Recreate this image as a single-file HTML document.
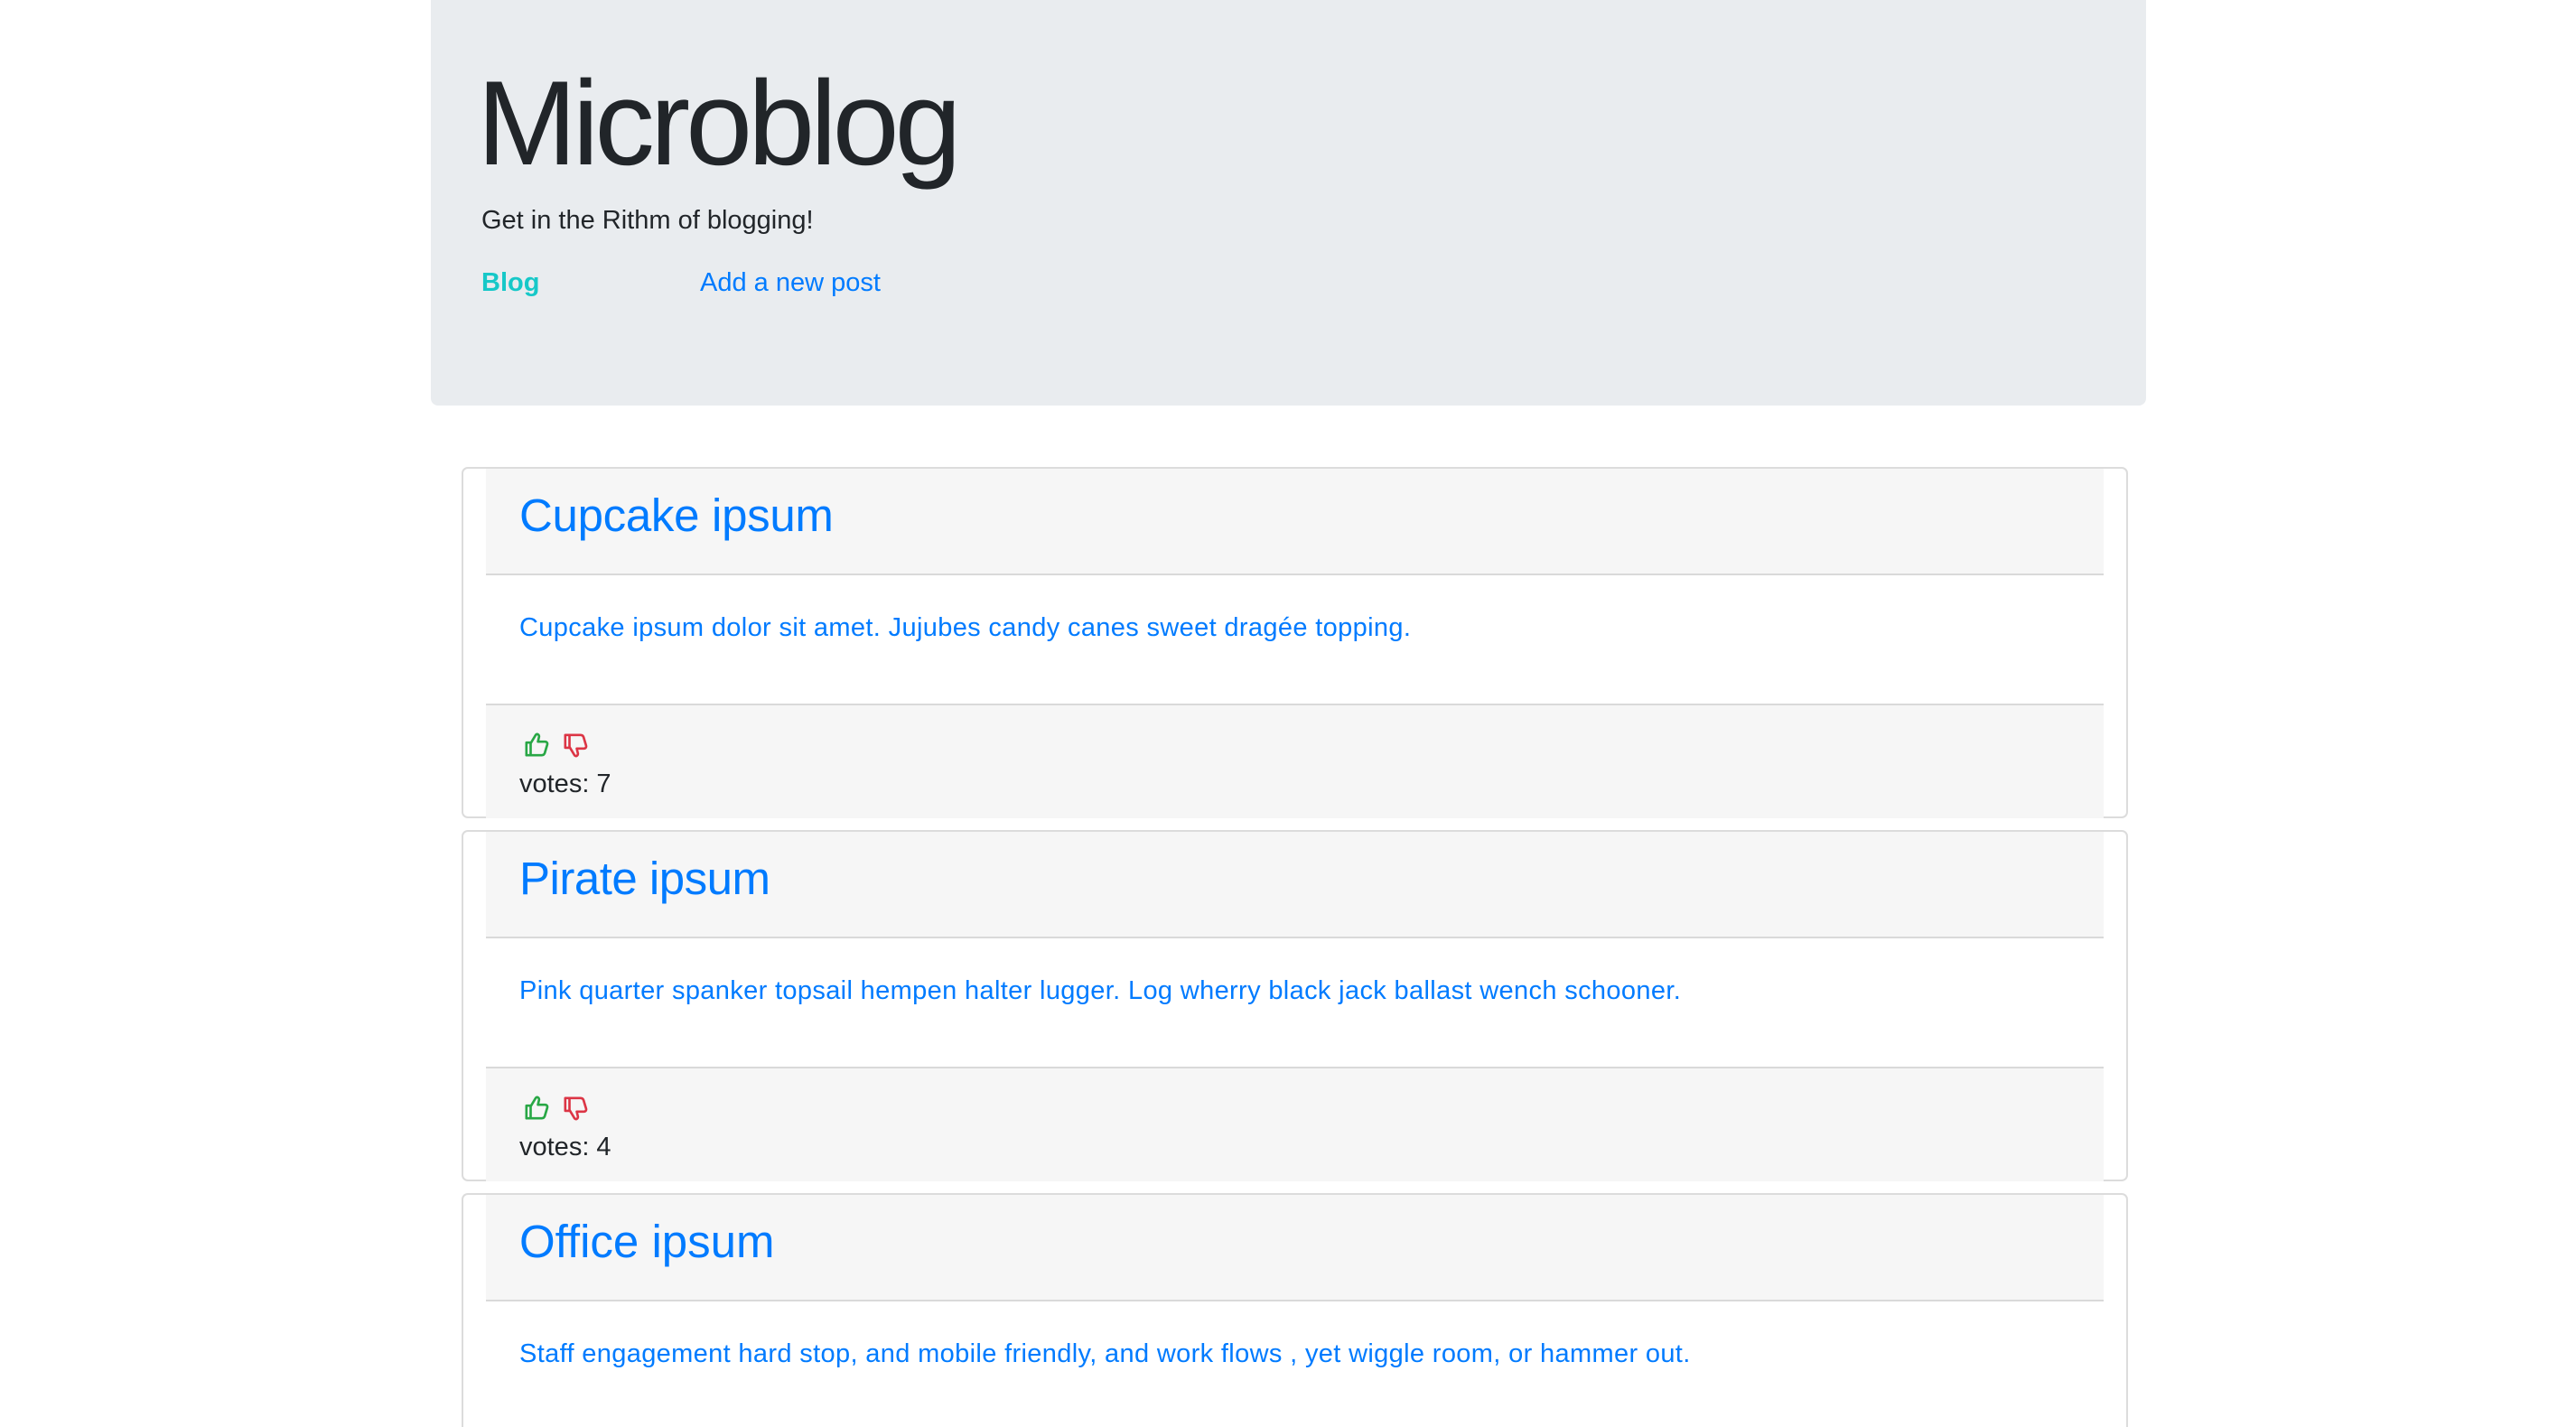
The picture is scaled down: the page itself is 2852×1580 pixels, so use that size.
<!DOCTYPE html>
<html><head><meta charset="utf-8"><style>
html,body{margin:0;padding:0;background:#fff;width:2852px;height:1578px;overflow:hidden;font-family:"Liberation Sans",sans-serif;}
.t{position:absolute;line-height:1;white-space:nowrap;}
.jumbo{position:absolute;left:477px;top:-10px;width:1899px;height:459px;background:#e9ecef;border-radius:8px;}
.card{position:absolute;left:511px;width:1841px;height:385px;border:2px solid #dcdcdc;border-radius:7px;background:#fff;}
.hd{position:absolute;left:25px;width:1791px;top:0;height:116px;background:#f6f6f6;border-bottom:2px solid #d9d9d9;}
.ft{position:absolute;left:25px;width:1791px;top:260px;height:125px;background:#f6f6f6;border-top:2px solid #d9d9d9;}
</style></head><body>
<div class="jumbo"></div>
<div class="t" style="left:528px;top:71px;font-size:133px;font-weight:300;color:#212529;letter-spacing:-5px;">Microblog</div>
<div class="t" style="left:533px;top:230px;font-size:29px;color:#212529;">Get in the Rithm of blogging!</div>
<div class="t" style="left:533px;top:299px;font-size:29px;color:#17c8c8;font-weight:bold;">Blog</div>
<div class="t" style="left:775px;top:299px;font-size:29px;color:#007bff;">Add a new post</div>

<div class="card" style="top:517px;">
 <div class="hd"></div><div class="ft"></div>
 <div class="t" style="left:62px;top:26px;font-size:51px;color:#007bff;letter-spacing:-0.3px;">Cupcake ipsum</div>
 <div class="t" style="left:62px;top:162px;font-size:29px;color:#007bff;letter-spacing:0.35px;">Cupcake ipsum dolor sit amet. Jujubes candy canes sweet dragée topping.</div>
 <svg style="position:absolute;left:67px;top:290px" width="30" height="30" viewBox="0 0 16 16"><path d="M1.5 7h2.5v7.5h-2.5z M4 7.5l3-5c1-1 2 0 2 1l-.7 3h4.2c1 0 1.6.8 1.3 1.8l-1.5 5c-.3.8-.9 1.2-1.7 1.2H4" fill="none" stroke="#28a745" stroke-width="1.4" stroke-linejoin="round"/></svg>
 <svg style="position:absolute;left:110px;top:292px" width="30" height="30" viewBox="0 0 16 16"><path d="M1.5 9h2.5V1.5H1.5z M4 8.5l3 5c1 1 2 0 2-1l-.7-3h4.2c1 0 1.6-.8 1.3-1.8l-1.5-5C12 1.9 11.4 1.5 10.6 1.5H4" fill="none" stroke="#dc3545" stroke-width="1.4" stroke-linejoin="round"/></svg>
 <div class="t" style="left:62px;top:335px;font-size:29px;color:#212529;">votes: 7</div>
</div>

<div class="card" style="top:919px;">
 <div class="hd"></div><div class="ft"></div>
 <div class="t" style="left:62px;top:26px;font-size:51px;color:#007bff;letter-spacing:-0.5px;">Pirate ipsum</div>
 <div class="t" style="left:62px;top:162px;font-size:29px;color:#007bff;letter-spacing:0.35px;">Pink quarter spanker topsail hempen halter lugger. Log wherry black jack ballast wench schooner.</div>
 <svg style="position:absolute;left:67px;top:290px" width="30" height="30" viewBox="0 0 16 16"><path d="M1.5 7h2.5v7.5h-2.5z M4 7.5l3-5c1-1 2 0 2 1l-.7 3h4.2c1 0 1.6.8 1.3 1.8l-1.5 5c-.3.8-.9 1.2-1.7 1.2H4" fill="none" stroke="#28a745" stroke-width="1.4" stroke-linejoin="round"/></svg>
 <svg style="position:absolute;left:110px;top:292px" width="30" height="30" viewBox="0 0 16 16"><path d="M1.5 9h2.5V1.5H1.5z M4 8.5l3 5c1 1 2 0 2-1l-.7-3h4.2c1 0 1.6-.8 1.3-1.8l-1.5-5C12 1.9 11.4 1.5 10.6 1.5H4" fill="none" stroke="#dc3545" stroke-width="1.4" stroke-linejoin="round"/></svg>
 <div class="t" style="left:62px;top:335px;font-size:29px;color:#212529;">votes: 4</div>
</div>

<div class="card" style="top:1321px;height:257px;border-bottom:none;border-radius:7px 7px 0 0;">
 <div class="hd"></div>
 <div class="t" style="left:62px;top:26px;font-size:51px;color:#007bff;">Office ipsum</div>
 <div class="t" style="left:62px;top:162px;font-size:29px;color:#007bff;letter-spacing:0.35px;">Staff engagement hard stop, and mobile friendly, and work flows , yet wiggle room, or hammer out.</div>
</div>
</body></html>
